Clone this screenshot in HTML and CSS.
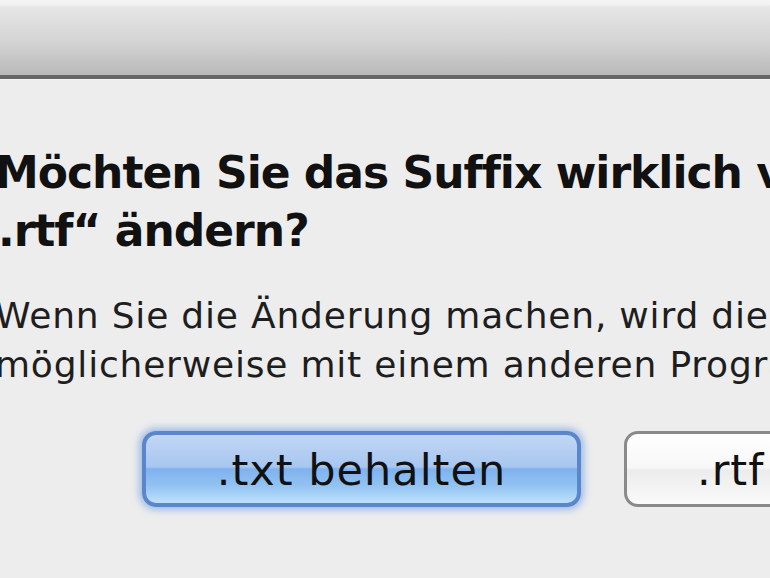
FILE: index.html
```html
<!DOCTYPE html>
<html lang="de">
<head>
<meta charset="utf-8">
<title>Suffix ändern</title>
<link rel="stylesheet" href="styles.css">
</head>
<body>
<div class="window">
  <div class="titlebar"></div>
  <div class="content">
    <h1 class="title">Möchten Sie das Suffix wirklich von „.txt“ in<br><span class="hang">„</span>.rtf“ ändern?</h1>
    <p class="message">Wenn Sie die Änderung machen, wird die Datei<br>möglicherweise mit einem anderen Programm geöffnet.</p>
    <div class="buttons">
      <button class="btn btn-default">.txt behalten</button>
      <button class="btn btn-plain">.rtf verwenden</button>
    </div>
  </div>
</div>
</body>
</html>
```

FILE: styles.css
```css
html, body {
  margin: 0;
  padding: 0;
}
body {
  width: 770px;
  height: 578px;
  overflow: hidden;
  background: #ededed;
  font-family: "DejaVu Sans", "Liberation Sans", sans-serif;
}
.window {
  width: 770px;
  height: 578px;
  overflow: hidden;
  background: #ededed;
}
.titlebar {
  height: 75px;
  background: linear-gradient(to bottom, #f3f3f3 0px, #f3f3f3 4px, #e6e6e6 7px, #d5d5d5 40px, #bababa 74px);
  border-bottom: 4px solid #666;
  box-shadow: 0 1px 0 #f6f6f6;
}
.content {
  margin-left: -5px;
  white-space: nowrap;
}
.title {
  margin: 0;
  padding-top: 65px;
  font-size: 44px;
  line-height: 58px;
  font-weight: bold;
  letter-spacing: -1px;
  color: #111;
}
.hang {
  margin-left: -25px;
}
.message {
  margin: 31px 0 0;
  font-size: 36px;
  line-height: 49px;
  letter-spacing: 0.8px;
  color: #1e1e1e;
}
.buttons {
  display: flex;
  gap: 43px;
  margin: 42px 0 0 147px;
}
.btn {
  flex: none;
  height: 76px;
  font-family: inherit;
  font-size: 43px;
  letter-spacing: 1px;
  color: #111;
  padding: 0;
  border-radius: 14px;
}
.btn-default {
  width: 439px;
  border: 4px solid #5a86cb;
  padding-top: 2px;
  background: linear-gradient(to bottom, #c1d7f5 0%, #a8c6ef 47%, #7fb2ee 50%, #93c3f2 75%, #bfe1fb 100%);
  box-shadow: 0 0 7px 3px rgba(80, 140, 230, 0.5);
}
.btn-plain {
  width: 300px;
  border: 3px solid #8a8a8a;
  padding-top: 2px;
  background: linear-gradient(to bottom, #ffffff 0%, #f7f7f7 48%, #ececec 52%, #fafafa 100%);
  text-align: left;
  padding-left: 70px;
}
```
